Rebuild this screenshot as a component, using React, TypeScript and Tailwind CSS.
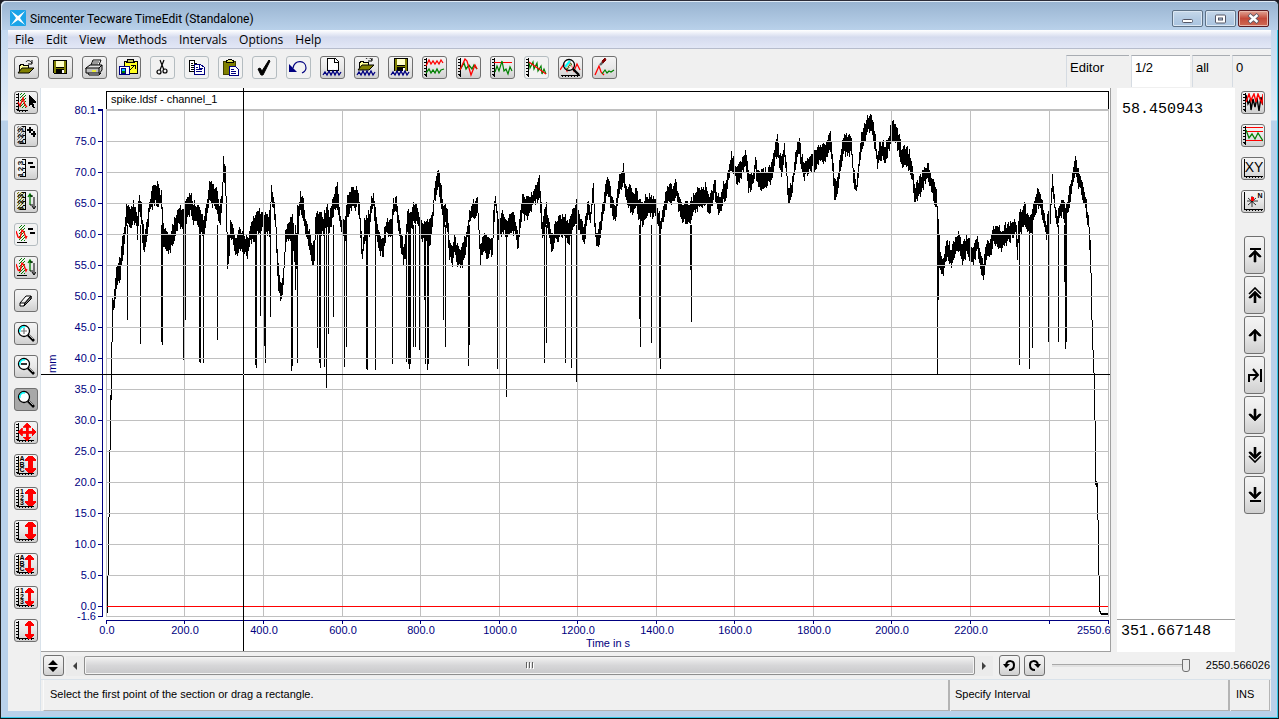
import React, { useState } from "react";

type IconProps = { children: React.ReactNode; w?: number; h?: number; smooth?: boolean };

function Pic({ children, w = 21, h = 19, smooth = false }: IconProps) {
  return (
    <svg
      width={w}
      height={h}
      viewBox={`0 0 ${w} ${h}`}
      fill="none"
      shapeRendering={smooth ? "auto" : "crispEdges"}
      className="shrink-0"
      aria-hidden="true"
    >
      {children}
    </svg>
  );
}

/* ---------- shared icon parts ---------- */

const NavyWave = () => (
  <path d="M1 17l2-3 2 3 2-4 2 4 2-4 2 4 2-4 2 4 2-3" stroke="#000080" strokeWidth="1.3" shapeRendering="auto" />
);

const Folder = ({ y = 0 }: { y?: number }) => (
  <g transform={`translate(0 ${y})`}>
    <path d="M3 13V6h1V5h3v1h5v3" fill="#ffff99" stroke="#000" />
    <path d="M2 14l4-5h12l-5 5z" fill="#808000" stroke="#000" shapeRendering="auto" />
    <path d="M10 3c1-2 4-2 6 1M16 1v4h-4" stroke="#000" shapeRendering="auto" />
  </g>
);

const Disk = () => (
  <>
    <path d="M3 2h14v14H4l-1-1z" fill="#000" />
    <path d="M4 3h2v7h8V3h2v12h-2v-4H6v4H4z" fill="#808000" />
    <path d="M6 3h8v6H6z" fill="#ffffc8" />
    <path d="M12 12h2v3h-2z" fill="#fff" />
  </>
);

const TickAxes = ({ w = 19 }: { w?: number }) => (
  <>
    <path d={`M2 0v18M1 17h${w}`} stroke="#000" />
    <path d="M0 1h2M0 4h2M0 7h2M0 10h2M0 13h2M0 16h2" stroke="#000" />
    <path d={`M3 18h${w - 2}`} stroke="#000" strokeDasharray="1 2" />
  </>
);

const Hatch = ({ x, w, h, color }: { x: number; w: number; h: number; color: string }) => {
  const id = `hatch-${color.slice(1)}-${x}`;
  return (
    <>
      <defs>
        <pattern id={id} width="3" height="3" patternUnits="userSpaceOnUse">
          <path d="M2 0h1v1h-1zM1 1h1v1h-1zM0 2h1v1h-1z" fill={color} />
        </pattern>
      </defs>
      <rect x={x} y="0" width={w} height={h} fill={`url(#${id})`} />
    </>
  );
};

const RedWave = () => (
  <path d="M0 6l2 6 2 1 2-8 2 2 2 6 1-2" stroke="#f00" shapeRendering="auto" strokeWidth="1.3" />
);

const UpDown = () => (
  <g shapeRendering="auto">
    <path d="M14 13V3M12 5l2-3 2 3" stroke="#008000" strokeWidth="1.3" />
    <path d="M18 5v11M16 14l2 3 2-3M14 13h3M14 4h3" stroke="#000" />
  </g>
);

const Minuses = () => <path d="M12 3h5v2h-5zM14 7h5v2h-5z" fill="#000" />;

const iconFont = "'Liberation Sans', Arial, sans-serif";

const Ruler = ({ color }: { color?: string }) => (
  <>
    <rect x="1" y="0" width="9" height="18" fill={color ? "#ddd" : "#f4f4f4"} />
    {color && <Hatch x={1} w={7} h={18} color={color} />}
    <path d="M9 0v18M6 0h4M7 5h3M7 9h3M7 13h3M4 17h6" stroke="#000" />
    <g fontFamily={iconFont} fontSize="8" fontWeight="bold" fill="#000" textAnchor="middle">
      <text transform="translate(7 4) rotate(-90)">3</text>
      <text transform="translate(7 10) rotate(-90)">2</text>
      <text transform="translate(7 16) rotate(-90)">1</text>
    </g>
  </>
);

const Lens = ({ children }: { children?: React.ReactNode }) => (
  <g shapeRendering="auto">
    <circle cx="8" cy="7" r="5.5" fill="#fff" stroke="#000" strokeWidth="1.3" />
    <path d="M4 8a4 4 0 0 1 5-5" stroke="#0ff" strokeWidth="1.4" />
    <path d="M12 11l6 6" stroke="#000" strokeWidth="2.6" />
    <path d="M13 11l4 4" stroke="#fff" strokeWidth=".7" />
    {children}
  </g>
);

const FatArrow = () => (
  <path d="M12 0h5l3 4v1h-3v7h3v1l-3 4h-5l-3-4v-1h3V5H9V4z" fill="#f00" />
);
const ThinArrow = () => (
  <path d="M13 0h3l3 4v1h-3v8h3v1l-3 4h-3l-3-4v-1h3V5h-3V4z" fill="#f00" transform="translate(-1 0)" />
);

const Stack = ({ chars }: { chars: string }) => (
  <g fontFamily={iconFont} fontSize="7" fontWeight="bold" fill="#000" textAnchor="middle">
    <text x="6" y="5">{chars[0]}</text>
    <text x="6" y="11">{chars[1]}</text>
    <text x="6" y="16">{chars[2]}</text>
  </g>
);

/* ---------- buttons ---------- */

type Tool = { label: string; icon: React.ReactNode; muted?: boolean; pressed?: boolean };

const frame = "flex shrink-0 items-center justify-center rounded-[3px] border";
const normal = "border-[#707070] bg-linear-to-b from-[#f4f4f4] via-[#e8e8e8] to-[#cfcfcf]";
const muted = "border-[#b4bcc0] bg-[#f2f2f2]";
const down = "border-[#707070] bg-[#a8a8a8]";

function ToolButton({ tool, size }: { tool: Tool; size: string }) {
  const look = tool.pressed ? down : tool.muted ? muted : normal;
  return (
    <button type="button" aria-label={tool.label} title={tool.label} className={`${frame} ${look} ${size}`}>
      {tool.icon}
    </button>
  );
}

const toolbar: Tool[] = [
  { label: "Open", icon: <Pic><Folder y={1} /></Pic> },
  { label: "Save", icon: <Pic><Disk /></Pic> },
  {
    label: "Print",
    icon: (
      <Pic smooth>
        <path d="M7 7l2-5h8l-2 5" fill="#fff" stroke="#000" />
        <path d="M9 4h6M8 6h6" stroke="#000" strokeWidth=".8" />
        <path d="M2 10l4-3h12l-3 4H2z" fill="#e0e0e0" stroke="#000" />
        <path d="M2 10h13v5H2zM15 10l3-3v5l-3 4" fill="#c0c0c0" stroke="#000" />
        <path d="M4 15l1 2h10l2-2" stroke="#000" />
        <path d="M8 13h4" stroke="#ff0" strokeWidth="1.4" />
      </Pic>
    ),
  },
  {
    label: "Import",
    icon: (
      <Pic>
        <path d="M6 3h13v12H6z" fill="#ffff20" stroke="#000" />
        <path d="M9 4l1-3h5l1 3z" fill="#c0c060" stroke="#000" />
        <path d="M1 8h10v8H1z" fill="#fff" stroke="#000080" />
        <path d="M3 10h4v5H3z" fill="#0cf" stroke="#000080" />
        <path d="M4 13h3v2H4z" fill="#008000" />
        <path d="M12 12l4-4M13 7h4v4" stroke="#000" />
      </Pic>
    ),
  },
  {
    label: "Cut",
    muted: true,
    icon: (
      <Pic smooth>
        <path d="M8 2l2 5 2 5M12 2l-2 5-2 5" stroke="#000" strokeWidth="1.2" />
        <circle cx="7" cy="14" r="2" stroke="#000" strokeWidth="1.2" />
        <circle cx="13" cy="13" r="2" stroke="#000" strokeWidth="1.2" />
      </Pic>
    ),
  },
  {
    label: "Copy",
    muted: true,
    icon: (
      <Pic>
        <path d="M3 2h5l3 3v8H3z" fill="#fff" />
        <path d="M3 2h6M3 2v11h5M8 2v3h3" stroke="#000" />
        <path d="M5 5h2M5 7h4M5 9h3M5 11h3" stroke="#000" />
        <path d="M8 6h6l4 3v7H8z" fill="#fff" stroke="#000080" />
        <path d="M13 6v4h4M10 9h2M10 11h6M10 13h6" stroke="#000080" />
      </Pic>
    ),
  },
  {
    label: "Paste",
    muted: true,
    icon: (
      <Pic>
        <path d="M3 3h12v13H3z" fill="#808000" stroke="#404000" />
        <path d="M6 4V2h2l1-1h2l1 1h1v2z" fill="#e0e060" stroke="#000" />
        <path d="M9 8h6l3 3v6H9z" fill="#fff" stroke="#000080" />
        <path d="M11 11h3M11 13h5M11 15h5" stroke="#000080" />
      </Pic>
    ),
  },
  {
    label: "Check",
    muted: true,
    icon: <Pic smooth><path d="M4 11l2-1 2 3L15 2l1 1-7 14H7z" fill="#000" stroke="#000" /></Pic>,
  },
  {
    label: "Undo",
    muted: true,
    icon: (
      <Pic smooth>
        <path d="M1 6v8h8z" fill="#000080" />
        <path d="M5 10c2-9 13-8 13 0 0 3-2 4-4 5" stroke="#000080" strokeWidth="1.2" />
      </Pic>
    ),
  },
  {
    label: "New signal",
    icon: (
      <Pic>
        <path d="M5 0h8l3 3v9H5z" fill="#fff" stroke="#000" />
        <path d="M12 0v4h4" stroke="#000" />
        <NavyWave />
      </Pic>
    ),
  },
  { label: "Open signal", icon: <Pic><Folder y={-2} /><NavyWave /></Pic> },
  {
    label: "Save signal",
    icon: <Pic><g transform="translate(1 -2)"><Disk /></g><path d="M0 13h21v6H0z" fill="#dedede" /><NavyWave /></Pic>,
  },
  {
    label: "Show channels",
    icon: (
      <Pic>
        <TickAxes w={1} />
        <g shapeRendering="auto">
          <path d="M2 8l3-6 2 4 2-3 2 3 2-3 2 3 2-4 2 3" stroke="#f00" strokeWidth="1.3" />
          <path d="M2 15l3-4 2 4 2-3 2 3 2-4 2 4 2-3 3-1" stroke="#008000" strokeWidth="1.3" />
        </g>
      </Pic>
    ),
  },
  {
    label: "Overlay channels",
    icon: (
      <Pic>
        <TickAxes w={1} />
        <g shapeRendering="auto">
          <path d="M2 12l4-7 2 6 3-4 3 4 2-4 3 4" stroke="#008000" strokeWidth="1.3" />
          <path d="M2 12l5-11 2 2 4 14 4-10 2 4" stroke="#f00" strokeWidth="1.3" />
        </g>
      </Pic>
    ),
  },
  {
    label: "Threshold",
    icon: (
      <Pic>
        <TickAxes w={1} />
        <path d="M2 4h18" stroke="#f00" strokeWidth="1" />
        <path d="M3 14l2-6 2 5 3-10 2 10 2-2 2 5 2-7 2 4" stroke="#008000" shapeRendering="auto" strokeWidth="1.2" />
      </Pic>
    ),
  },
  {
    label: "Trend",
    muted: true,
    icon: (
      <Pic>
        <TickAxes w={1} />
        <path d="M3 4l1 6 3-6 1 7 3-6 1 8 3-5 1 8 2-5 2 5" stroke="#008000" shapeRendering="auto" strokeWidth="1.2" />
        <path d="M3 4l17 12" stroke="#f00" shapeRendering="auto" strokeWidth="1.3" />
      </Pic>
    ),
  },
  {
    label: "Inspect signal",
    icon: (
      <Pic>
        <path d="M1 17h19" stroke="#000" />
        <path d="M2 18h18" stroke="#000" strokeDasharray="1 2" />
        <g shapeRendering="auto">
          <path d="M0 12l4-6 3 7 3-9 4 9 3-7 3 6" stroke="#f00" strokeWidth="1.3" />
          <circle cx="9" cy="7" r="5.500" stroke="#000" strokeWidth="1.3" fill="#fff" fillOpacity=".5" />
          <path d="M5 9l5-6" stroke="#0ff" strokeWidth="2" />
          <path d="M7 11l5-6" stroke="#008000" strokeDasharray="1 1" strokeWidth="2" />
          <path d="M13 11l6 6" stroke="#000" strokeWidth="2.4" />
        </g>
      </Pic>
    ),
  },
  {
    label: "Pick peaks",
    icon: (
      <Pic smooth>
        <path d="M1 17L5 8l2 6 3 3" stroke="#f00" strokeWidth="1.3" />
        <path d="M8 16l3-4 2 3 2-2 2 1 3-2" stroke="#008000" strokeWidth="1.2" />
        <path d="M6 7l3-3" stroke="#606060" strokeWidth="2.4" />
        <path d="M8 3l3-3 1 2-3 3z" fill="#800000" stroke="#800000" />
      </Pic>
    ),
  },
];

const leftTools: Tool[] = [
  {
    label: "Select interval",
    icon: (
      <Pic w={20}>
        <TickAxes w={11} />
        <Hatch x={4} w={6} h={15} color="#008000" />
        <path d="M2 9l2 4 3-8 2 7 2 2" stroke="#f00" shapeRendering="auto" strokeWidth="1.3" />
        <path d="M13 2v11l2-2 2 4h2l-2-5h3v-1z" fill="#000" />
      </Pic>
    ),
  },
  { label: "Add channels", icon: <Pic w={20}><Ruler color="#808080" /><path d="M13 1h2v2h2v2h-2v2h-2V5h-2V3h2zM17 5h2v2h1v2h-1v2h-2V9h-2V7h2z" fill="#000" /></Pic> },
  { label: "Remove channels", icon: <Pic w={20}><Ruler /><Minuses /></Pic> },
  { label: "Swap channels", icon: <Pic w={20}><Ruler color="#808000" /><UpDown /></Pic> },
  { label: "Remove interval", muted: true, icon: <Pic w={20}><path d="M1 17h10" stroke="#000" /><Hatch x={3} w={6} h={16} color="#008000" /><RedWave /><Minuses /></Pic> },
  { label: "Swap interval", icon: <Pic w={20}><path d="M1 17h10" stroke="#000" /><Hatch x={3} w={6} h={16} color="#008000" /><RedWave /><UpDown /></Pic> },
  {
    label: "Erase",
    icon: (
      <Pic w={20} smooth>
        <path d="M4 12l6-7h5l-6 7zM4 12v3h4l7-7V5M9 12l-1 3" fill="#fff" stroke="#000" />
        <path d="M9 12l6-7v3l-7 7z" fill="#808080" stroke="#000" />
      </Pic>
    ),
  },
  { label: "Zoom in", icon: <Pic w={20}><Lens><path d="M8 4v6M5 7h6" stroke="#777" strokeWidth="1.2" /></Lens></Pic> },
  { label: "Zoom out", icon: <Pic w={20}><Lens><path d="M5 7h6" stroke="#000" strokeWidth="1.6" /></Lens></Pic> },
  { label: "Zoom region", pressed: true, icon: <Pic w={20}><Lens /></Pic> },
  {
    label: "Fit all",
    icon: (
      <Pic w={20}>
        <TickAxes w={17} />
        <path d="M11 0l4 4h-3v4h4V5l4 4-4 4v-3h-4v4h3l-4 4-4-4h3v-4H6v3L2 9l4-4v3h4V4H7z" fill="#f00" stroke="#f00" strokeWidth=".8" />
      </Pic>
    ),
  },
  { label: "Fit height, all channels", icon: <Pic w={20}><TickAxes w={17} /><Stack chars="ABC" /><FatArrow /></Pic> },
  { label: "Fit height, numbered", icon: <Pic w={20}><TickAxes w={17} /><Stack chars="123" /><FatArrow /></Pic> },
  { label: "Fit height", icon: <Pic w={20}><TickAxes w={17} /><FatArrow /></Pic> },
  { label: "Scale all channels", icon: <Pic w={20}><TickAxes w={17} /><Stack chars="ABC" /><ThinArrow /></Pic> },
  { label: "Scale numbered", icon: <Pic w={20}><TickAxes w={17} /><Stack chars="123" /><ThinArrow /></Pic> },
  { label: "Scale", icon: <Pic w={20}><TickAxes w={17} /><ThinArrow /></Pic> },
];

const rightTools: Tool[] = [
  {
    label: "Compare signals",
    icon: (
      <Pic w={20}>
        <TickAxes w={1} />
        <g shapeRendering="auto" strokeWidth="1.4">
          <path d="M3 2l2 9 2-4 1 10 2-11 2 8 2-9 2 13 2-14 2 8" stroke="#000" />
          <path d="M3 9l3-8 2 7 1-3 2-4 2 8 2-8 2 5 2 4 1-9" stroke="#f00" />
        </g>
      </Pic>
    ),
  },
  {
    label: "Limits",
    icon: (
      <Pic w={20}>
        <TickAxes w={1} />
        <path d="M3 1h17M3 5h17M3 14h17" stroke="#f00" />
        <path d="M3 4l3 8 3-4 3 5 3-6 5 8" stroke="#008000" shapeRendering="auto" strokeWidth="1.3" />
      </Pic>
    ),
  },
  {
    label: "XY plot",
    icon: (
      <Pic w={20}>
        <path d="M1 0v17h19" stroke="#000" />
        <path d="M3 18h17" stroke="#000" strokeDasharray="1 2" />
        <text x="11" y="13" textAnchor="middle" fontFamily={iconFont} fontSize="14" fill="#000">XY</text>
      </Pic>
    ),
  },
  {
    label: "Polar plot",
    icon: (
      <Pic w={20}>
        <path d="M1 0v17h19" stroke="#000" />
        <path d="M3 18h17" stroke="#000" strokeDasharray="1 2" />
        <path d="M9 4v11M4 9h11M5 6l8 7M13 6l-8 7" stroke="#000" strokeWidth=".8" shapeRendering="auto" />
        <path d="M8 5h3v4H8z" fill="#f00" />
        <text x="17" y="6" textAnchor="middle" fontFamily={iconFont} fontSize="7" fontWeight="bold" fill="#000">N</text>
      </Pic>
    ),
  },
];

const up = "M1 8l6-6 6 6v1h-2L8 6v8H6V6L3 9H1z";
const dn = "M1 6l6 6 6-6V5h-2L8 8V0H6v8L3 5H1z";

const navTools: Tool[] = [
  { label: "First", icon: <Pic w={14} h={16} smooth><path d="M2 1h11v2H2z" fill="#000" /><path d={up} fill="#000" stroke="#000" strokeWidth=".6" transform="translate(0 1)" /></Pic> },
  { label: "Page up", icon: <Pic w={14} h={16} smooth><path d="M1 7l6-6 6 6" stroke="#000" strokeWidth="1.6" /><path d={up} fill="#000" stroke="#000" strokeWidth=".6" transform="translate(0 2)" /></Pic> },
  { label: "Up", icon: <Pic w={14} h={16} smooth><path d={up} fill="#000" stroke="#000" strokeWidth=".6" /></Pic> },
  { label: "Go to", icon: <Pic w={14} h={16} smooth><path d="M1 15V8h8M5 2l5 6-5 5" stroke="#000" strokeWidth="2" /><path d="M12 2h2v13h-2z" fill="#000" /></Pic> },
  { label: "Down", icon: <Pic w={14} h={16} smooth><path d={dn} fill="#000" stroke="#000" strokeWidth=".6" transform="translate(0 2)" /></Pic> },
  { label: "Page down", icon: <Pic w={14} h={16} smooth><path d="M1 9l6 6 6-6" stroke="#000" strokeWidth="1.6" /><path d={dn} fill="#000" stroke="#000" strokeWidth=".6" /></Pic> },
  { label: "Last", icon: <Pic w={14} h={16} smooth><path d="M2 13h11v2H2z" fill="#000" /><path d={dn} fill="#000" stroke="#000" strokeWidth=".6" /></Pic> },
];

/* ---------- chart ---------- */

// Signal envelope: x, upper edge, lower edge.
const envelope: number[][] = [
  [106,604,613],[107,575,613],[108,517,575],[109,450,517],[110,395,450],[111,342,400],[112,298,342],[113,300,310],[116,270,290],[118,263,280],[120,260,278],[122,240,258],[124,230,243],[126,207,223],[128,208,225],[131,210,227],[133,203,220],[136,212,223],[137,215,240],[139,197,210],[141,207,223],[142,223,243],[144,233,253],[147,220,233],[149,200,213],[152,190,207],[155,187,200],[157,185,205],[159,192,203],[161,195,208],[163,223,243],[165,233,247],[167,233,250],[170,233,248],[173,225,240],[175,218,233],[178,208,225],[181,210,225],[183,213,230],[185,202,223],[187,198,217],[190,193,210],[192,202,220],[195,205,222],[198,210,225],[201,212,232],[203,220,237],[205,213,228],[207,200,213],[209,181,200],[212,185,203],[214,188,203],[217,190,210],[219,207,223],[220,203,220],[222,187,200],[223,157,173],[225,170,193],[226,217,230],[227,240,265],[229,237,257],[230,223,237],[232,223,237],[234,238,253],[237,237,252],[239,232,248],[243,237,250],[247,240,256],[249,232,243],[252,220,238],[254,217,237],[257,213,233],[262,213,228],[267,218,233],[268,217,233],[270,206,240],[271,190,203],[273,197,210],[275,213,223],[277,250,277],[279,280,295],[281,283,297],[283,270,283],[285,233,247],[287,225,237],[290,220,237],[292,212,233],[294,237,263],[295,257,287],[297,210,250],[299,205,215],[300,192,207],[303,202,218],[305,220,233],[307,225,240],[310,237,250],[312,248,263],[314,240,260],[315,217,230],[318,213,233],[323,217,232],[327,205,223],[329,217,230],[332,203,220],[334,192,207],[337,185,205],[339,207,223],[341,222,233],[345,217,237],[347,200,217],[350,192,207],[353,190,207],[357,190,205],[359,205,220],[361,233,250],[362,247,260],[364,223,243],[367,217,233],[369,213,233],[371,200,213],[373,192,207],[375,210,230],[377,227,242],[380,237,253],[383,237,253],[386,222,233],[389,223,235],[391,222,235],[393,202,213],[396,199,212],[398,217,230],[401,233,250],[403,247,263],[405,237,255],[407,213,233],[410,213,233],[413,205,223],[417,207,223],[420,223,237],[423,223,240],[427,220,240],[430,223,243],[432,210,223],[434,187,200],[437,175,190],[438,170,188],[441,190,207],[443,208,223],[445,203,223],[447,213,233],[449,240,257],[452,245,262],[454,237,253],[457,247,263],[459,253,266],[463,243,262],[465,237,250],[467,227,237],[469,213,223],[472,203,218],[475,203,220],[477,197,213],[479,233,247],[480,248,263],[482,237,250],[484,235,248],[487,242,257],[489,237,252],[492,240,252],[493,213,230],[495,197,207],[497,210,223],[498,223,237],[502,215,230],[507,220,233],[511,213,230],[514,217,232],[516,230,240],[518,235,250],[520,213,223],[522,197,213],[525,200,217],[530,197,213],[533,192,203],[537,183,200],[539,178,197],[541,207,230],[542,223,237],[544,212,230],[546,207,223],[548,220,232],[552,237,253],[554,227,240],[558,220,237],[562,218,233],[565,218,237],[569,223,240],[573,210,227],[575,205,220],[577,203,220],[579,217,230],[582,225,240],[584,227,242],[586,213,227],[588,200,213],[590,213,223],[592,193,203],[593,183,200],[594,213,223],[596,235,247],[599,227,240],[601,217,230],[603,200,213],[606,183,197],[607,177,192],[610,187,203],[612,202,213],[615,208,223],[617,193,207],[619,178,193],[623,167,180],[625,183,198],[627,190,205],[629,187,205],[632,195,213],[636,190,205],[639,203,220],[642,205,223],[645,198,217],[650,197,213],[655,198,215],[657,207,223],[660,220,233],[662,213,223],[665,195,208],[667,188,203],[672,187,202],[676,183,197],[678,197,210],[681,205,218],[685,203,220],[690,205,222],[693,197,213],[697,192,208],[702,190,205],[705,187,202],[709,200,213],[712,193,205],[714,178,190],[717,197,210],[719,197,212],[721,195,210],[723,185,200],[726,185,197],[728,168,180],[731,153,168],[734,165,175],[737,168,182],[740,165,177],[743,155,168],[746,155,168],[748,175,188],[751,175,187],[753,172,182],[755,157,170],[757,172,183],[762,172,187],[768,170,183],[772,163,177],[775,143,157],[777,138,153],[779,155,165],[781,158,173],[784,147,158],[786,163,177],[788,190,203],[789,192,205],[792,180,190],[795,157,165],[797,143,153],[799,138,153],[801,157,168],[804,163,177],[807,158,173],[811,155,168],[815,153,167],[819,147,162],[823,145,160],[827,142,158],[830,133,147],[832,153,170],[834,180,197],[837,180,193],[839,163,178],[843,138,153],[847,137,152],[851,138,153],[853,167,180],[856,183,193],[859,153,167],[861,137,150],[864,127,140],[867,118,133],[870,113,127],[873,125,138],[875,138,150],[877,157,170],[879,147,158],[882,143,157],[885,147,162],[888,138,150],[891,125,140],[893,123,137],[896,128,143],[899,138,153],[901,150,163],[905,148,163],[909,153,168],[912,167,180],[914,187,199],[917,185,197],[921,177,192],[924,168,183],[927,165,178],[930,172,187],[933,183,197],[936,193,207],[937,210,227],[939,237,263],[940,253,270],[943,262,275],[945,250,263],[947,242,258],[951,250,267],[954,242,257],[958,233,248],[962,247,262],[966,237,253],[969,242,257],[973,250,265],[975,245,257],[977,237,248],[980,253,267],[983,265,277],[986,245,258],[989,242,257],[993,228,243],[997,227,243],[1001,233,250],[1005,227,242],[1010,225,238],[1015,222,233],[1017,237,257],[1019,213,233],[1022,210,227],[1024,203,220],[1027,217,228],[1031,218,233],[1033,202,217],[1037,192,205],[1041,197,210],[1043,212,223],[1046,223,238],[1048,210,223],[1050,203,220],[1052,175,190],[1055,207,217],[1057,215,227],[1059,205,218],[1062,200,213],[1065,207,230],[1067,200,213],[1071,180,193],[1075,156,170],[1077,168,182],[1082,183,195],[1085,197,207],[1088,217,227],[1090,240,273],[1091,290,320],[1092,323,350],[1093,353,373],[1094,383,420],[1095,420,485],[1096,481,487],[1097,483,520],[1098,520,575],[1099,575,612],[1100,611,614],[1101,613,615],[1107,613,615],
];

// Drop-outs below the envelope: x, lowest point.
const drops: number[][] = [
  [127,320],[140,344],[161,342],[162,345],[183,360],[185,320],[199,362],[200,363],[203,363],[217,340],[255,365],[256,368],[260,316],[264,346],[265,363],[270,317],[291,371],[292,366],[295,288],[297,363],[317,348],[319,363],[320,368],[324,367],[326,388],[328,334],[333,317],[344,367],[346,347],[366,369],[367,370],[375,370],[392,364],[406,362],[408,364],[409,369],[410,364],[413,347],[415,347],[419,350],[424,300],[425,364],[427,370],[428,364],[443,320],[445,347],[468,366],[469,345],[497,369],[506,397],[544,363],[546,343],[565,363],[571,368],[576,382],[639,319],[640,347],[651,343],[659,358],[660,369],[690,270],[691,322],[937,374],[938,300],[1019,365],[1029,369],[1032,348],[1048,342],[1058,342],[1064,282],[1065,349],[1066,342],
];

const noise = (n: number) => {
  const v = Math.sin(n * 127.1) * 43758.5453;
  return v - Math.floor(v);
};

function tracePath(): string {
  let d = "";
  let i = 0;
  let prevTop = 604;
  let prevBottom = 613;
  const last = envelope[envelope.length - 1][0];
  for (let x = envelope[0][0]; x <= last; x++) {
    while (i < envelope.length - 2 && envelope[i + 1][0] <= x) i++;
    const [x0, t0, b0] = envelope[i];
    const [x1, t1, b1] = envelope[i + 1];
    const f = (x - x0) / (x1 - x0);
    const jitter = x > 113 && x < 1089 ? 1 : 0;
    let top = Math.round(t0 + (t1 - t0) * f + jitter * (noise(x) * 7 - 5));
    let bottom = Math.round(b0 + (b1 - b0) * f + jitter * (noise(x + 5000) * 7 - 2));
    if (top < 111) top = 111;
    if (bottom <= top) bottom = top + 1;
    if (top > prevBottom) top = prevBottom;
    if (bottom < prevTop) bottom = prevTop;
    prevTop = top;
    prevBottom = bottom;
    d += `M${x} ${top}V${bottom}h1V${top}z`;
  }
  for (const [x, y] of drops) d += `M${x} 225V${y}h1V225z`;
  return d;
}

const trace = tracePath();

const gridX = [106, 184, 263, 342, 420, 499, 577, 656, 734, 813, 891, 970, 1049, 1108];
const gridY = [141, 172, 203, 234, 265, 296, 327, 358, 389, 420, 451, 482, 513, 544, 575, 616];
const yLabels: [string, number][] = [
  ["80.1", 110], ["75.0", 141], ["70.0", 172], ["65.0", 203], ["60.0", 234], ["55.0", 265],
  ["50.0", 296], ["45.0", 327], ["40.0", 358], ["35.0", 389], ["30.0", 420], ["25.0", 451],
  ["20.0", 482], ["15.0", 513], ["10.0", 544], ["5.0", 575], ["0.0", 606], ["-1.6", 616],
];
const xLabels = ["0.0", "200.0", "400.0", "600.0", "800.0", "1000.0", "1200.0", "1400.0", "1600.0", "1800.0", "2000.0", "2200.0"];

function Chart() {
  return (
    <svg
      id="chart"
      viewBox="41 88 1069 563"
      preserveAspectRatio="none"
      className="block h-full w-full"
      fontFamily={iconFont}
      fontSize="11"
      shapeRendering="crispEdges"
      role="img"
      aria-label="spike.ldsf - channel_1"
    >
      <path d={trace} fill="#000" />
      <g fill="#c0c0c0">
        {gridX.map((x) => <rect key={x} x={x} y="109" width="1" height="508" />)}
        {gridY.map((y) => <rect key={y} x="106" y={y} width="1003" height="1" />)}
        <rect x="106" y="109" width="1003" height="2" />
      </g>
      <rect x="107" y="606" width="1001" height="1" fill="#f00" />
      <path d="M106 91h1003v18h-1V92H107v17h-1z" fill="#000" />
      <g fill="#000080">
        <rect x="102" y="109" width="1" height="508" />
        <rect x="98" y="109" width="4" height="1" />
        {yLabels.map(([t, y]) => (
          <React.Fragment key={t}>
            <rect x="98" y={y} width="5" height="1" />
            <text x="96" y={y + 4} textAnchor="end">{t}</text>
          </React.Fragment>
        ))}
        <rect x="106" y="620" width="1003" height="1" />
        {gridX.map((x) => <rect key={x} x={x} y="620" width="1" height="4" />)}
        {xLabels.map((t, i) => (
          <text key={t} x={gridX[i] + 1} y="634" textAnchor="middle">{t}</text>
        ))}
        <text x="1077" y="634">2550.6</text>
        <text x="608" y="647" textAnchor="middle">Time in s</text>
        <text transform="translate(56 373) rotate(-90)">mm</text>
      </g>
      <text x="111" y="103" fill="#000">spike.ldsf - channel_1</text>
      <path d="M243 88h1v563h-1zM41 374h1069v1H41z" fill="#000" />
      <rect x="243" y="374" width="1" height="1" fill="#fff" />
    </svg>
  );
}

/* ---------- window ---------- */

const menus = ["File", "Edit", "View", "Methods", "Intervals", "Options", "Help"];
const fieldBase = "h-[32px] border-t border-l border-t-[#a8acb2] border-l-[#d5dbe2] pr-1 pb-2 pl-[3px] text-[13px] outline-none";
const smallBtn = `${frame} ${normal} size-[21px]`;

export default function App() {
  const [range, setRange] = useState(96);
  return (
    <div className="h-screen overflow-hidden bg-[#1c1c24] font-['Liberation_Sans',Arial,sans-serif] text-[11px] text-black">
      <div className="flex h-full flex-col rounded-t-[6px] border border-t-[#2c2c38] border-r-[#20282c] border-b-[#101010] border-l-[#202020] bg-[#b9d1ea]">
        <header className="flex h-[29px] shrink-0 items-center rounded-t-[5px] bg-linear-to-b from-[#98b3d0] to-[#b9d1ea] pr-[9px] pl-[9px] shadow-[inset_1px_1px_0_#dfeaf5]">
          <svg width="16" height="16" viewBox="0 0 16 16" className="mt-1" aria-hidden="true">
            <rect width="16" height="16" rx="1" fill="#1ba4e8" />
            <path d="M1 1l5 7-5 7 7-5 7 5-5-7 5-7-7 5z" fill="#fff" />
          </svg>
          <h1 className="mt-1.5 ml-1 grow font-[Roboto,'Noto_Sans',sans-serif] text-[12px] leading-[16px]">
            Simcenter Tecware TimeEdit (Standalone)
          </h1>
          <div className="mt-1.5 flex gap-[2px]">
            <button type="button" aria-label="Minimize" className="flex h-[17px] w-[31px] items-center justify-center rounded-[2px] border border-[#5d7186] bg-linear-to-b from-[#c6d8ea] via-[#b4cbe3] to-[#aac4e0] shadow-[inset_0_0_0_1px_#dbe7f3]">
              <svg width="13" height="11" viewBox="0 0 13 11"><rect x="1.5" y="6.5" width="10" height="3" rx="1" fill="#fff" stroke="#535666" /></svg>
            </button>
            <button type="button" aria-label="Maximize" className="flex h-[17px] w-[31px] items-center justify-center rounded-[2px] border border-[#5d7186] bg-linear-to-b from-[#c6d8ea] via-[#b4cbe3] to-[#aac4e0] shadow-[inset_0_0_0_1px_#dbe7f3]">
              <svg width="11" height="10" viewBox="0 0 11 10"><rect x=".5" y="1" width="10" height="8" rx="1" fill="#fff" stroke="#535666" /><rect x="3.5" y="4" width="4" height="2" fill="#b4cbe3" stroke="#535666" /></svg>
            </button>
            <button type="button" aria-label="Close" className="flex h-[17px] w-[31px] items-center justify-center rounded-[2px] border border-[#5a1a22] bg-linear-to-b from-[#e0a396] via-[#c4493a] to-[#cf6a55] shadow-[inset_0_0_0_1px_#eab8ac]">
              <svg width="13" height="11" viewBox="0 0 13 11"><path d="M2 1.500l9 8M11 1.500l-9 8" stroke="#535666" strokeWidth="4" /><path d="M2.500 2l8 7M10.500 2l-8 7" stroke="#fff" strokeWidth="2.400" /></svg>
            </button>
          </div>
        </header>

        <div className="flex min-h-0 grow flex-col bg-[#b9d1ea] bg-[linear-gradient(to_bottom,#c4d9f0,#e2edf8_90px,#b9d1ea_91px)] pr-[7px] pb-[7px] pl-[7px] shadow-[inset_-1px_-1px_0_#35c8e8]">
          <nav className="flex h-[19px] shrink-0 items-center border-b border-[#b6bccc] bg-linear-to-b from-white via-[#d5dbee] via-40% to-[#e2e7f6] pt-[2px] pl-[7px] font-['Open_Sans','Noto_Sans',sans-serif] text-[12px]">
            {menus.map((m) => (
              <button key={m} type="button" className="mr-3 leading-[16px]">{m}</button>
            ))}
          </nav>

          <div className="flex h-[39px] shrink-0 items-start justify-between bg-[#f0f0f0] pt-[7px] pl-[6px]">
            <div className="flex gap-[9px]">
              {toolbar.map((t) => <ToolButton key={t.label} tool={t} size="h-[23px] w-[25px]" />)}
            </div>
            <div className="-mt-px flex gap-[2px]">
              <input aria-label="Mode" readOnly defaultValue="Editor" className={`${fieldBase} w-[63px] bg-[#f0f0f0]`} />
              <input aria-label="Page" defaultValue="1/2" className={`${fieldBase} w-[59px] bg-white`} />
              <input aria-label="Channels" readOnly defaultValue="all" className={`${fieldBase} w-[38px] bg-[#f0f0f0]`} />
              <input aria-label="Offset" readOnly defaultValue="0" className={`${fieldBase} w-[39px] bg-[#f0f0f0]`} />
            </div>
          </div>

          <div className="flex min-h-0 grow bg-[#f0f0f0]">
            <aside className="flex w-[33px] shrink-0 flex-col gap-[10px] border-r border-[#d9e2ea] pt-[3px] pl-[6px]">
              {leftTools.map((t) => <ToolButton key={t.label} tool={t} size="h-[23px] w-[24px]" />)}
            </aside>

            <div className="flex min-w-0 grow flex-col">
              <div className="flex min-h-0 grow">
                <main className="min-w-0 grow border-r border-b border-[#a0a0a0] bg-white">
                  <Chart />
                </main>
                <section className="ml-[6px] flex w-[118px] shrink-0 flex-col bg-white font-['Liberation_Mono','Courier_New',monospace] text-[15px]">
                  <output className="grow pt-[13px] pl-[5px] leading-[18px]">58.450943</output>
                  <output className="h-[33px] border-t border-[#a0a0a0] pt-[3px] pl-1 leading-[18px]">351.667148</output>
                </section>
                <aside className="flex w-[36px] shrink-0 flex-col pt-[3px] pl-[6px]">
                  <div className="flex flex-col gap-[10px]">
                    {rightTools.map((t) => <ToolButton key={t.label} tool={t} size="h-[23px] w-[24px]" />)}
                  </div>
                  <div className="mt-[23px] flex flex-col gap-[2px] pl-[3px]">
                    {navTools.map((t) => <ToolButton key={t.label} tool={t} size="h-[38px] w-[21px]" />)}
                  </div>
                </aside>
              </div>

              <div className="flex h-[28px] shrink-0 items-center border-b border-[#d9e2ea] pl-[2px]">
                <button type="button" aria-label="Channel step" className={smallBtn}>
                  <svg width="13" height="13" viewBox="0 0 13 13"><path d="M1 6l5-5 5 5zM1 8h10l-5 5z" fill="#000" /></svg>
                </button>
                <div className="ml-[2px] flex h-[20px] grow items-center bg-[#ebebeb]">
                  <button type="button" aria-label="Scroll left" className="flex h-full w-[18px] items-center justify-center">
                    <svg width="6" height="8" viewBox="0 0 6 8"><path d="M5 0v8L1 4z" fill="#404040" /></svg>
                  </button>
                  <div role="scrollbar" aria-label="Time axis" aria-controls="chart" aria-valuenow={0} aria-orientation="horizontal" className="flex h-[19px] grow items-center justify-center rounded-[2px] border border-[#8e8e8e] bg-linear-to-b from-[#f2f2f2] via-[#d6d6d8] via-50% to-[#c8c8ca] shadow-[inset_0_0_0_1px_#f4f4f4]">
                    <svg width="8" height="7" viewBox="0 0 8 7" shapeRendering="crispEdges"><path d="M0 0h1v6H0zM3 0h1v6H3zM6 0h1v6H6z" fill="#606060" /><path d="M1 1h1v6H1zM4 1h1v6H4zM7 1h1v6H7z" fill="#fff" /></svg>
                  </div>
                  <button type="button" aria-label="Scroll right" className="flex h-full w-[18px] items-center justify-center">
                    <svg width="6" height="8" viewBox="0 0 6 8"><path d="M1 0v8l4-4z" fill="#404040" /></svg>
                  </button>
                </div>
                <div className="ml-[6px] flex gap-1">
                  <button type="button" aria-label="Rotate back" className={smallBtn}>
                    <svg width="15" height="15" viewBox="0 0 15 15" fill="none"><path d="M4 6c2-4 8-4 8 1 0 4-3 5-5 5" stroke="#000" strokeWidth="2" /><path d="M1 6h7L4 10z" fill="#000" /></svg>
                  </button>
                  <button type="button" aria-label="Rotate forward" className={smallBtn}>
                    <svg width="15" height="15" viewBox="0 0 15 15" fill="none"><path d="M11 6C9 2 3 2 3 7c0 4 3 5 5 5" stroke="#000" strokeWidth="2" /><path d="M14 6H7l4 4z" fill="#000" /></svg>
                  </button>
                </div>
                <input
                  type="range"
                  aria-label="Visible range"
                  min={0}
                  max={96}
                  value={range}
                  onChange={(e) => setRange(Number(e.target.value))}
                  className="ml-[7px] h-[20px] w-[138px] shrink-0 appearance-none bg-transparent [&::-webkit-slider-runnable-track]:h-[3px] [&::-webkit-slider-runnable-track]:border-t [&::-webkit-slider-runnable-track]:border-[#a8a8a8] [&::-webkit-slider-runnable-track]:bg-[#e2e2e2] [&::-webkit-slider-thumb]:-mt-[6px] [&::-webkit-slider-thumb]:h-[13px] [&::-webkit-slider-thumb]:w-[8px] [&::-webkit-slider-thumb]:appearance-none [&::-webkit-slider-thumb]:rounded-b-[3px] [&::-webkit-slider-thumb]:border [&::-webkit-slider-thumb]:border-[#707070] [&::-webkit-slider-thumb]:bg-[#ececec]"
                />
                <output className="w-[81px] shrink-0 pr-px text-right">2550.566026</output>
              </div>

              <footer className="flex h-[31px] shrink-0 gap-px pr-[1px] pl-[2px] leading-[28px]">
                <p className="grow border-r-2 border-b border-l border-[#b4b4b4] border-l-[#fafafa] pl-[6px]">Select the first point of the section or drag a rectangle.</p>
                <p className="w-[279px] border-r-2 border-b border-[#b4b4b4] pl-[4px]">Specify Interval</p>
                <p className="w-[39px] border-r border-b border-[#b4b4b4] pl-[5px]">INS</p>
              </footer>
            </div>
          </div>
        </div>
      </div>
    </div>
  );
}
